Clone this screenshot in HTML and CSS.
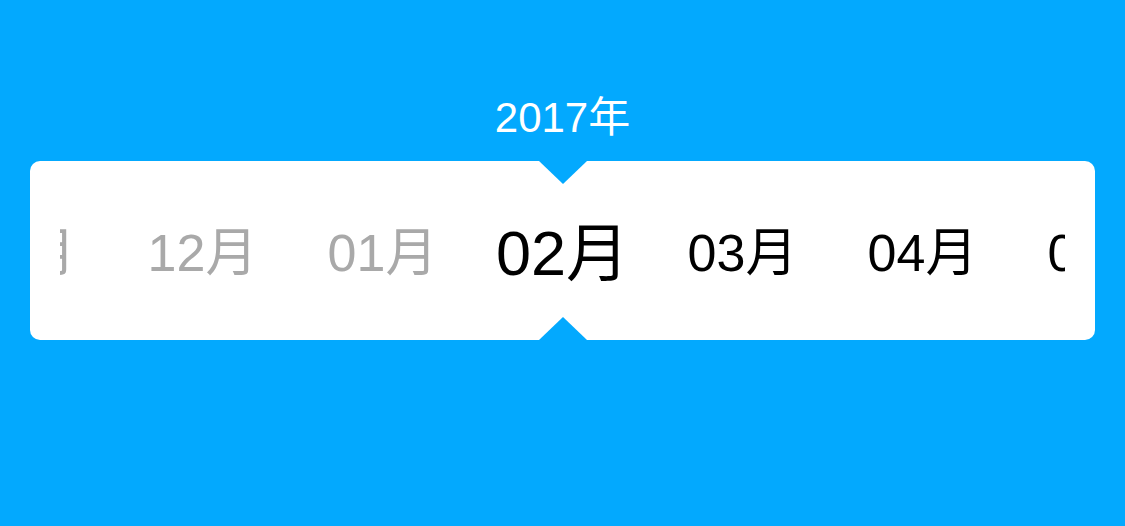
FILE: index.html
```html
<!DOCTYPE html>
<html lang="zh">
<head>
<meta charset="utf-8">
<title>月份选择</title>
<link rel="stylesheet" href="styles.css">
</head>
<body>
  <div class="page">
    <div class="year">2017年</div>
    <div class="picker">
      <div class="viewport">
        <div class="track">
          <div class="month past">11月</div>
          <div class="month past">12月</div>
          <div class="month past">01月</div>
          <div class="month current">02月</div>
          <div class="month">03月</div>
          <div class="month">04月</div>
          <div class="month">05月</div>
        </div>
      </div>
    </div>
  </div>
</body>
</html>
```

FILE: styles.css
```css
html, body {
  margin: 0;
  padding: 0;
  background: #03a9fe;
}

.page {
  width: 1125px;
  height: 526px;
  box-sizing: border-box;
  padding: 97px 30px 0;
  display: flex;
  flex-direction: column;
  align-items: stretch;
  gap: 22px;
  font-family: "Liberation Sans", "Noto Sans CJK SC", sans-serif;
}

.year {
  text-align: center;
  color: #ffffff;
  font-size: 42px;
  line-height: 42px;
  height: 42px;
}

.picker {
  position: relative;
  height: 179px;
  background: #ffffff;
  border-radius: 10px;
  padding: 0 30px;
  display: flex;
  align-items: center;
}

.picker::before,
.picker::after {
  content: "";
  position: absolute;
  left: 50%;
  transform: translateX(-50%);
  width: 0;
  height: 0;
  border-left: 24.5px solid transparent;
  border-right: 24.5px solid transparent;
}

.picker::before {
  top: 0;
  border-top: 23px solid #03a9fe;
}

.picker::after {
  bottom: 0;
  border-bottom: 23px solid #03a9fe;
}

.viewport {
  flex: 1;
  min-width: 0;
  overflow: hidden;
  height: 100%;
  display: flex;
  align-items: center;
}

.track {
  flex: 1;
  min-width: 0;
  padding-top: 4px;
  display: flex;
  justify-content: center;
  align-items: center;
}

.month {
  flex: 0 0 180px;
  width: 180px;
  text-align: center;
  font-size: 52px;
  line-height: 60px;
  color: #000000;
  white-space: nowrap;
}

.month.past {
  color: #a9a9a9;
}

.month.current {
  font-size: 63px;
  line-height: 70px;
}
```
